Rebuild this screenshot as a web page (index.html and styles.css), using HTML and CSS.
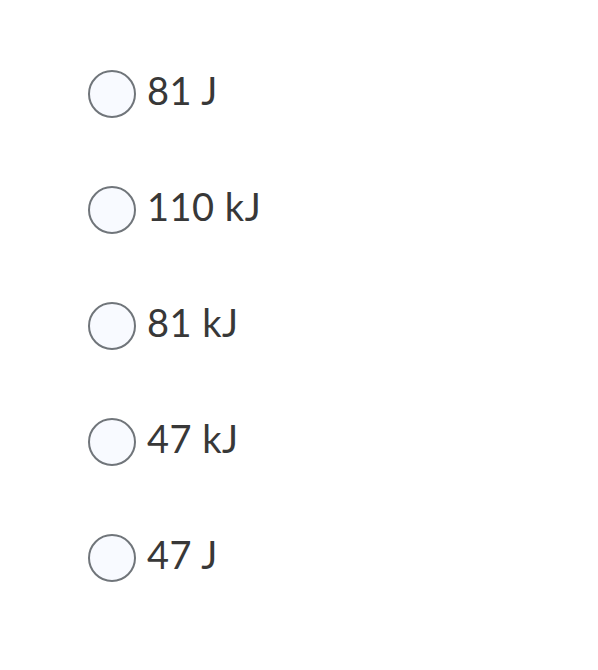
FILE: index.html
```html
<!DOCTYPE html>
<html>
<head>
<meta charset="utf-8">
<link rel="stylesheet" href="styles.css">
</head>
<body>
<div class="options">
  <label class="option"><span class="radio"></span><span class="text">81 J</span></label>
  <label class="option"><span class="radio"></span><span class="text">110 kJ</span></label>
  <label class="option"><span class="radio"></span><span class="text">81 kJ</span></label>
  <label class="option"><span class="radio"></span><span class="text">47 kJ</span></label>
  <label class="option"><span class="radio"></span><span class="text">47 J</span></label>
</div>
</body>
</html>
```
FILE: styles.css
```css
html, body {
  margin: 0;
  background: #ffffff;
}
.options {
  display: flex;
  flex-direction: column;
  padding: 36px 0 0 88px;
}
.option {
  display: flex;
  align-items: center;
  height: 116px;
  gap: 11px;
}
.radio {
  box-sizing: border-box;
  width: 48px;
  height: 48px;
  border: 2px solid #70757a;
  border-radius: 50%;
  background: #f8faff;
  flex: none;
}
.text {
  font-family: Lato, "Open Sans", sans-serif;
  font-size: 38px;
  color: #383838;
  line-height: 1;
  letter-spacing: 0.5px;
  padding-bottom: 8px;
}
```
